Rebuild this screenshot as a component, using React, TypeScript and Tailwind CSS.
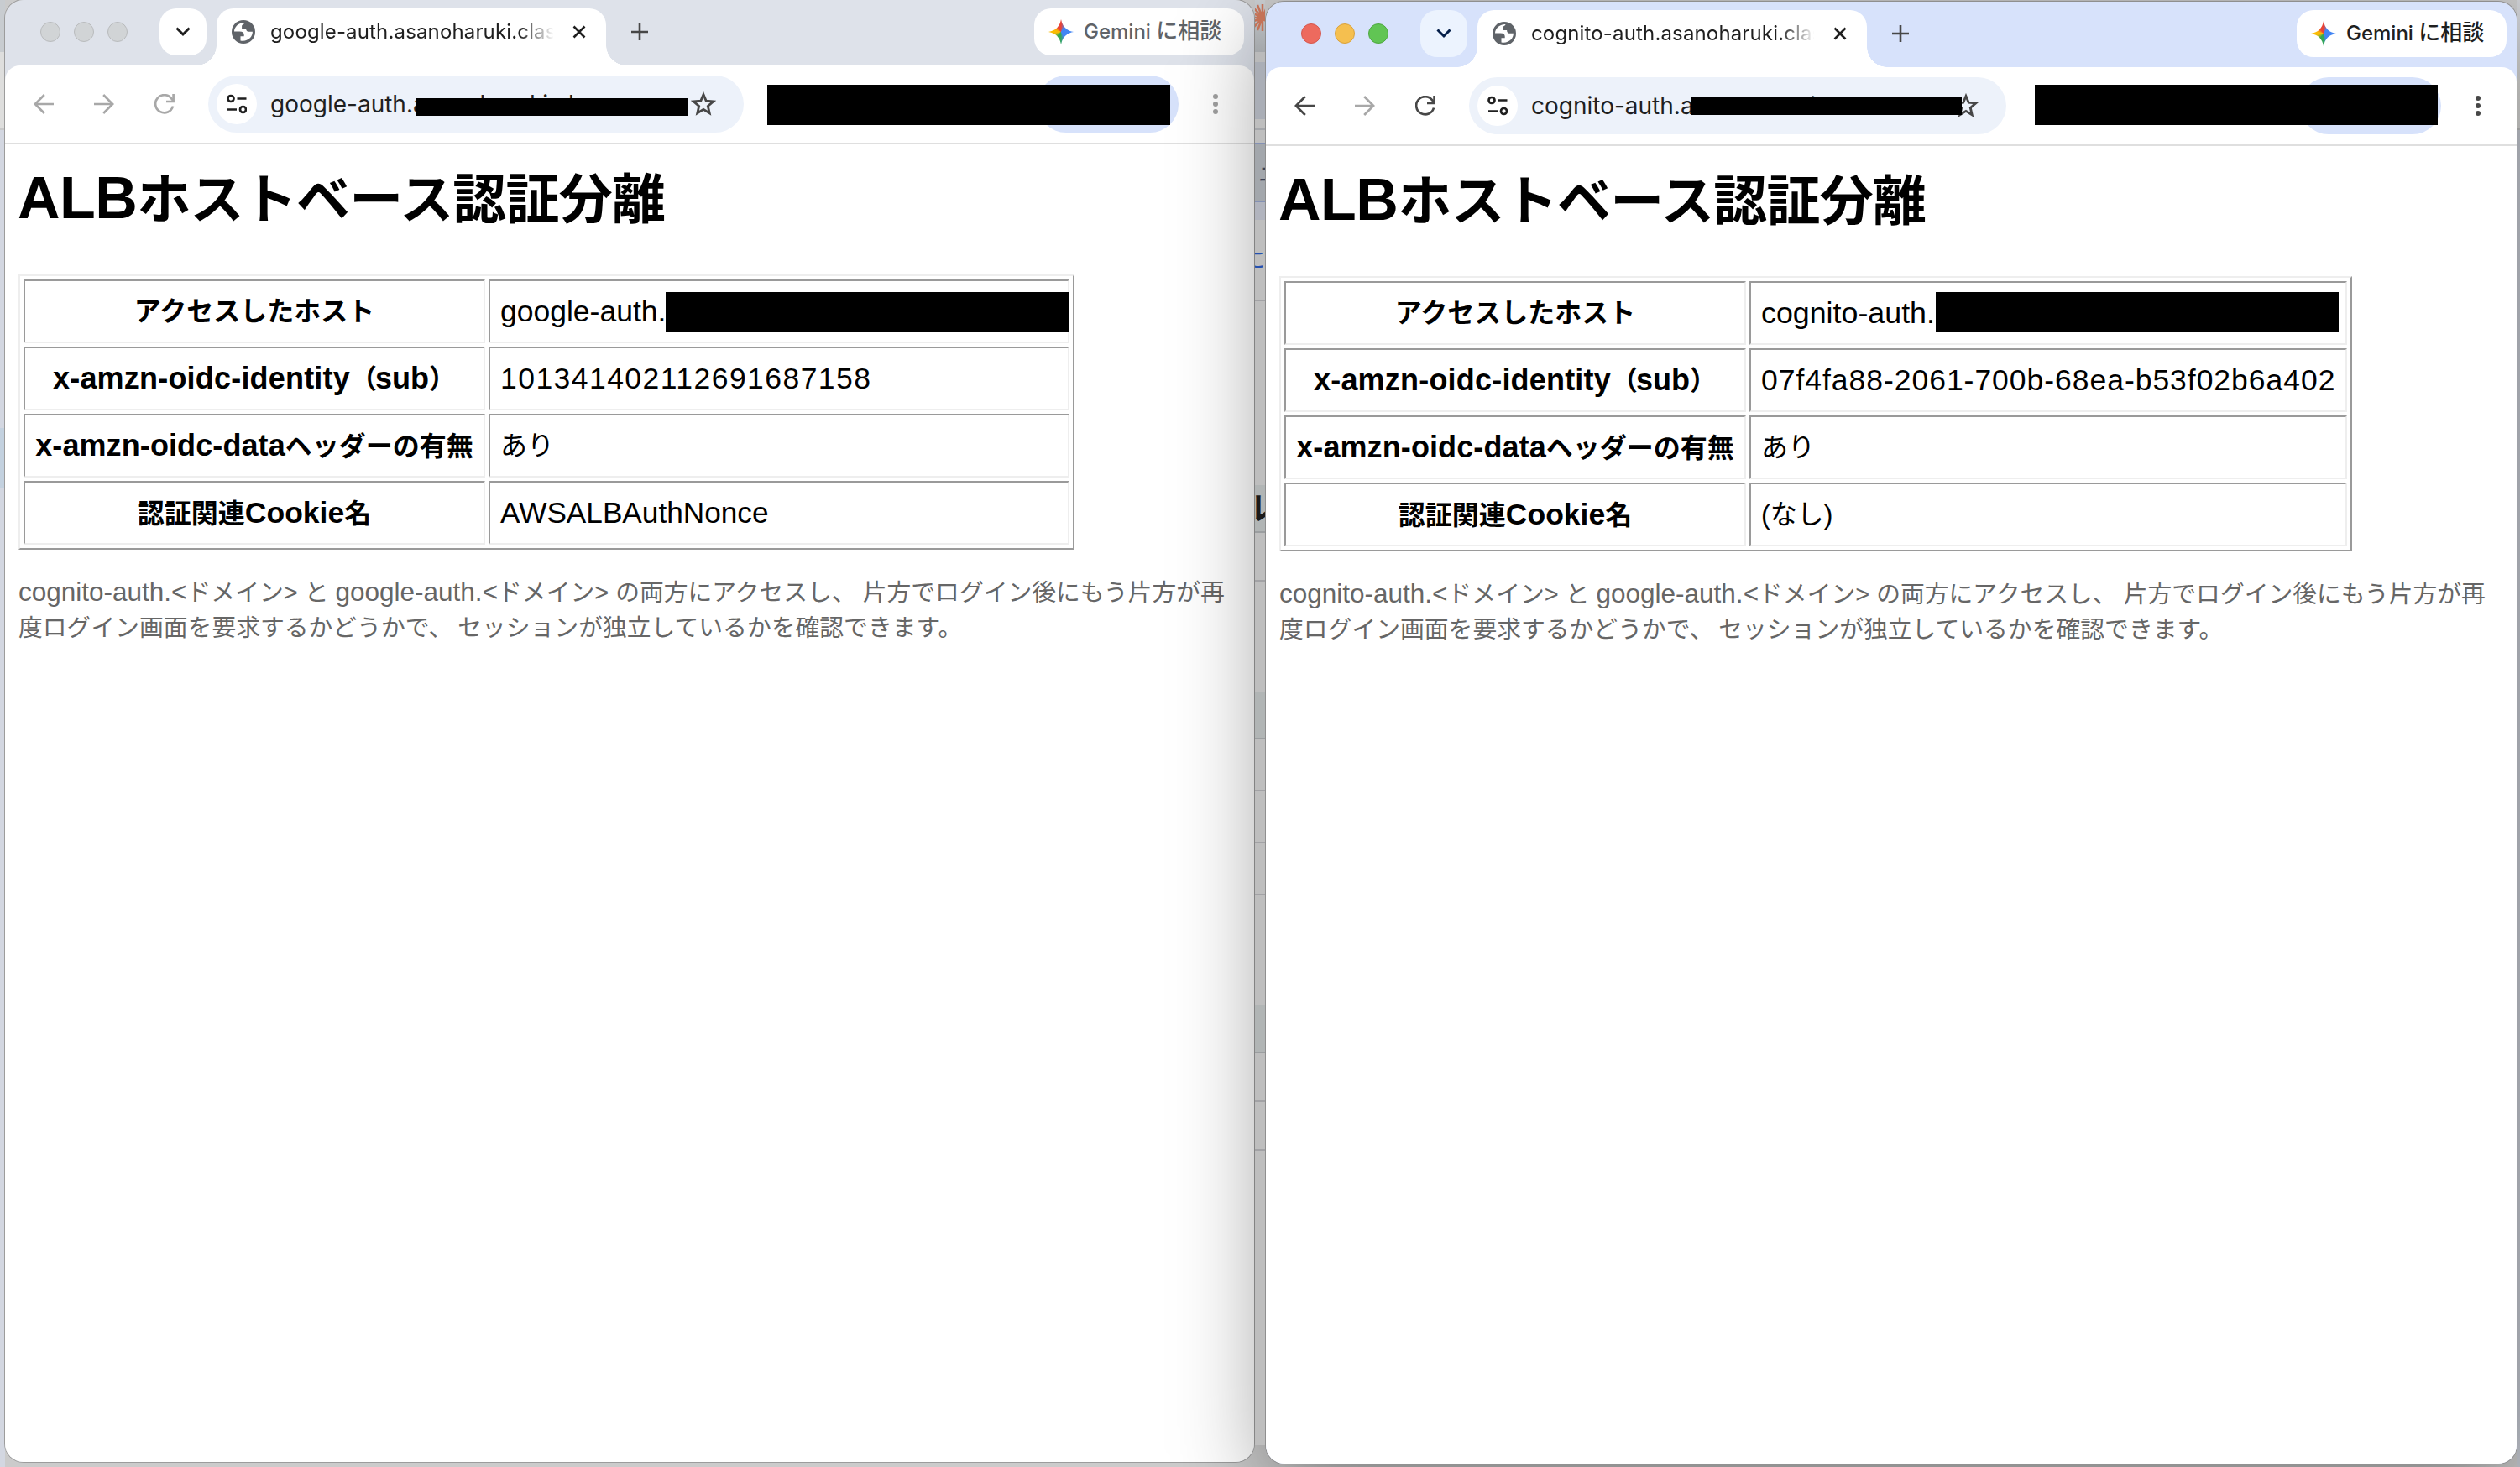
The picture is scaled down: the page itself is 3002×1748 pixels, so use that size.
import React from "react";

const JP = "font-['Liberation_Sans','Noto_Sans_CJK_JP',sans-serif]";
const UI = "font-['Inter','Noto_Sans_CJK_JP',sans-serif]";

const GlobeIcon = () => (
  <svg className="h-7 w-7 shrink-0" viewBox="0 0 28 28">
    <circle cx="14" cy="14" r="14" fill="#5f6368" />
    <path
      d="M15.500 3 C8.500 2.600 3 8 3 13.600 H9.500 c3.600 0 5.200 1.600 5.200 4 v1.600 h-4.200 v5.200 c7.600 1.800 14.400-3.600 14.400-10.600 h-3.400 c-3.200 0-4.400-1.400-4.400-3.900 h-5 V7.200 c0-2 3-2.200 3.400-4.200z"
      fill="#fff"
    />
  </svg>
);

const ChevronIcon = ({ color }: { color: string }) => (
  <svg className="h-[18px] w-[18px]" viewBox="0 0 18 18" fill="none">
    <path d="M1.500 4.500 9 12l7.500-7.500" stroke={color} strokeWidth="3" />
  </svg>
);

const CloseIcon = () => (
  <svg className="h-4 w-4 shrink-0" viewBox="0 0 16 16">
    <path d="M1.500 1.500l13 13M14.500 1.500l-13 13" stroke="#1f1f1f" strokeWidth="2.600" />
  </svg>
);

const PlusIcon = () => (
  <svg className="h-5 w-5 shrink-0" viewBox="0 0 20 20">
    <path d="M10 0v20M0 10h20" stroke="#474747" strokeWidth="2.600" />
  </svg>
);

const ArrowIcon = ({ color, flip }: { color: string; flip?: boolean }) => (
  <svg className={flip ? "h-6 w-6 -scale-x-100" : "h-6 w-6"} viewBox="0 0 24 24" fill="none">
    <path d="M24 12H2M12.800 1 1.800 12l11 11" stroke={color} strokeWidth="2.700" />
  </svg>
);

const ReloadIcon = ({ color }: { color: string }) => (
  <svg className="h-6 w-6" viewBox="0 0 24 24" fill="none">
    <path d="M22 14.500A10.600 10.600 0 1 1 20.300 5.500L22.500 8" stroke={color} strokeWidth="2.700" />
    <path d="M22.600 0v9H14" stroke={color} strokeWidth="2.700" />
  </svg>
);

const TuneIcon = () => (
  <svg className="h-6 w-6" viewBox="0 0 24 24" fill="none" stroke="#1f1f1f" strokeWidth="2.700">
    <circle cx="5" cy="5.500" r="3.500" />
    <path d="M12.500 5.500H23.500M1 18.500h11" />
    <circle cx="19.500" cy="18.500" r="3.500" />
  </svg>
);

const StarIcon = () => (
  <svg className="h-[30px] w-[30px] shrink-0" viewBox="0 0 30 30" fill="none">
    <path
      d="M15 3.500 18.200 11.200 26.700 11.900 20.300 17.400 22.200 25.700 15 21.300 7.800 25.700 9.700 17.400 3.300 11.900 11.800 11.200Z"
      stroke="#474747"
      strokeWidth="2.800"
    />
  </svg>
);

const GeminiIcon = () => (
  <div className="h-[30px] w-[30px] shrink-0 bg-[conic-gradient(from_0deg,#ea4335_0deg,#4285f4_35deg,#4285f4_150deg,#34a853_185deg,#34a853_215deg,#fbbc04_262deg,#fbbc04_285deg,#ea4335_325deg,#ea4335_360deg)] [clip-path:path('M15_0C16.400_8.500_21.500_13.600_30_15C21.500_16.400_16.400_21.500_15_30C13.600_21.500_8.500_16.400_0_15C8.500_13.600_13.600_8.500_15_0Z')]" />
);

const MoreIcon = ({ color }: { color: string }) => (
  <svg className="h-6 w-6" viewBox="0 0 24 24" fill={color}>
    <circle cx="12" cy="3" r="3" />
    <circle cx="12" cy="12" r="3" />
    <circle cx="12" cy="21" r="3" />
  </svg>
);

interface WindowProps {
  active?: boolean;
  host: string;
  children: React.ReactNode;
}

const TabStrip = ({ active, host }: { active?: boolean; host: string }) => (
  <div className="flex h-[78px] items-start pt-[10px]">
    <div className="ml-[42px] flex h-14 items-center gap-4">
      {active ? (
        <>
          <div className="h-6 w-6 rounded-full border border-[#d5584e] bg-[#ed6a5e]" />
          <div className="h-6 w-6 rounded-full border border-[#d9a23c] bg-[#f5bf4f]" />
          <div className="h-6 w-6 rounded-full border border-[#4ea73f] bg-[#61c554]" />
        </>
      ) : (
        <>
          <div className="h-6 w-6 rounded-full border border-[#b9bbbd] bg-[#d1d4d6]" />
          <div className="h-6 w-6 rounded-full border border-[#b9bbbd] bg-[#d1d4d6]" />
          <div className="h-6 w-6 rounded-full border border-[#b9bbbd] bg-[#d1d4d6]" />
        </>
      )}
    </div>
    <div
      className={`ml-[38px] flex h-14 w-14 items-center justify-center rounded-[20px] ${
        active ? "bg-[#ecf3fe]" : "bg-white"
      }`}
    >
      <ChevronIcon color={active ? "#041e49" : "#1f1f1f"} />
    </div>
    <div className="relative ml-3 flex h-[68px] w-[464px] rounded-t-[20px] bg-white pl-[18px]">
      <div className="absolute bottom-0 -left-6 h-6 w-6 bg-[radial-gradient(circle_at_0_0,transparent_23.5px,white_24px)]" />
      <div className="absolute -right-6 bottom-0 h-6 w-6 bg-[radial-gradient(circle_at_100%_0,transparent_23.5px,white_24px)]" />
      <div className="flex h-14 items-center">
        <GlobeIcon />
        <div className="ml-[18px] w-[337px] overflow-hidden text-[24px] leading-[56px] tracking-[0.150px] whitespace-nowrap text-[#1f1f1f] [mask-image:linear-gradient(to_right,black_296px,transparent_338px)]">
          {host}.asanoharuki.class
        </div>
        <div className="ml-[23px]">
          <CloseIcon />
        </div>
      </div>
    </div>
    <div className="ml-[30px] flex h-14 items-center">
      <PlusIcon />
    </div>
    <div className="mr-3 ml-auto flex h-14 w-[250px] items-center rounded-[20px] bg-white pl-[17px]">
      <GeminiIcon />
      <span
        className={`-mt-0.5 ml-3 text-[24px] leading-[56px] font-medium whitespace-nowrap ${
          active ? "text-[#1f1f1f]" : "text-[#5f6368]"
        }`}
      >
        Gemini <span className="text-[26px]">に相談</span>
      </span>
    </div>
  </div>
);

const Toolbar = ({ active, host }: { active?: boolean; host: string }) => (
  <div className="flex h-[94px] items-center rounded-t-[18px] border-b-2 border-[#dfdfdf] bg-white">
    <div className="ml-[34px] flex gap-12">
      <ArrowIcon color={active ? "#474747" : "#a8a8a8"} />
      <ArrowIcon color="#a8a8a8" flip />
      <ReloadIcon color={active ? "#474747" : "#a8a8a8"} />
    </div>
    <div className="relative ml-10 flex h-[68px] flex-1 items-center rounded-full bg-[#edf2fa] pl-[10px]">
      <div className="flex h-12 w-12 items-center justify-center rounded-full bg-white">
        <TuneIcon />
      </div>
      <div className="ml-4 w-[500px] overflow-hidden text-[28px] leading-[68px] whitespace-nowrap text-[#1f1f1f]">
        {host}.asanoharuki.class
      </div>
      <div className="absolute right-[33px]">
        <StarIcon />
      </div>
      <div
        className={
          active
            ? "absolute top-[24px] left-[264px] h-[21px] w-[323px] bg-black"
            : "absolute top-[27px] left-[248px] h-[21px] w-[323px] bg-black"
        }
      />
    </div>
    <div className="relative ml-7 h-[68px] w-[490px]">
      <div className="absolute top-0 right-0 h-[68px] w-[168px] rounded-full bg-[#d7e2fb]" />
      <div
        className={
          active
            ? "absolute top-[9px] left-[6px] h-12 w-[480px] bg-black"
            : "absolute top-[11px] left-0 h-12 w-[480px] bg-black"
        }
      />
    </div>
    <div className="mr-[34px] ml-8">
      <MoreIcon color={active ? "#474747" : "#a0a0a0"} />
    </div>
  </div>
);

const BrowserWindow = ({ active, host, children }: WindowProps) => (
  <div
    className={
      active
        ? "relative mt-[2px] h-[1742px] w-[1490px] rounded-[22px] shadow-[0_0_0_1px_#8f8f8f,0_30px_110px_rgba(0,0,0,0.4)]"
        : "h-[1742px] w-[1488px] rounded-[22px] shadow-[0_0_0_1px_#9c9c9c]"
    }
  >
    <div
      className={`h-full overflow-hidden rounded-[22px] ${
        active ? "bg-[#d7e2fb]" : "bg-[#dee2ea]"
      }`}
    >
      <div className={UI}>
        <TabStrip active={active} host={host} />
        <Toolbar active={active} host={host} />
      </div>
      <div className={`h-[1570px] bg-white pl-4 text-black ${JP}`}>{children}</div>
    </div>
  </div>
);

interface Row {
  label: React.ReactNode;
  value: React.ReactNode;
}

const ResultTable = ({ rows, wide }: { rows: Row[]; wide?: boolean }) => (
  <div className="mt-[35px] inline-grid gap-1 border-2 border-t-[#eeeeee] border-r-[#9a9a9a] border-b-[#9a9a9a] border-l-[#eeeeee] p-1">
    {rows.map((row, i) => (
      <div key={i} className="flex h-[76px] gap-1 text-[32px] leading-[72px] whitespace-nowrap">
        <div className="w-[550px] border-2 border-t-[#9a9a9a] border-r-[#eeeeee] border-b-[#eeeeee] border-l-[#9a9a9a] text-center font-bold">
          {row.label}
        </div>
        <div
          className={`flex border-2 border-t-[#9a9a9a] border-r-[#eeeeee] border-b-[#eeeeee] border-l-[#9a9a9a] pl-3 ${
            wide ? "w-[712px]" : "w-[692px]"
          }`}
        >
          {row.value}
        </div>
      </div>
    ))}
  </div>
);

const ResultPage = ({ rows, wide }: { rows: Row[]; wide?: boolean }) => (
  <>
    <h1 className="h-[120px] pt-4 text-[64px] leading-[96px] font-bold tracking-[-0.800px] whitespace-nowrap">
      <span className="-ml-px text-[70px] tracking-[-0.500px]">ALB</span>ホストベース認証分離
    </h1>
    <ResultTable rows={rows} wide={wide} />
    <p className="mt-[29px] text-[28.800px] leading-[42px] whitespace-nowrap text-[#666666]">
      <span className="text-[31.500px]">cognito-auth.&lt;</span>ドメイン
      <span className="text-[29px]">&gt;</span> と <span className="text-[31.500px]">google-auth.&lt;</span>
      ドメイン<span className="text-[29px]">&gt;</span> の両方にアクセスし、 片方でログイン後にもう片方が再
      <br />
      <span className="[word-spacing:-2px]">
        度ログイン画面を要求するかどうかで、 セッションが独立しているかを確認できます。
      </span>
    </p>
  </>
);

const identityLabel = (
  <>
    <span className="text-[36px] tracking-[0.200px]">x-amzn-oidc-identity</span>
    <span className="tracking-[-2px]">（</span>
    <span className="text-[36px]">sub</span>）
  </>
);

const dataLabel = (
  <>
    <span className="text-[36px] tracking-[0.100px]">x-amzn-oidc-data</span>ヘッダーの有無
  </>
);

const cookieLabel = (
  <>
    認証関連<span className="text-[35.500px]">Cookie</span>名
  </>
);

const googleRows: Row[] = [
  {
    label: "アクセスしたホスト",
    value: (
      <>
        <span className="w-[198px] text-[35.500px]">google-auth.</span>
        <span className="mt-[13px] h-12 w-[480px] shrink-0 bg-black" />
      </>
    ),
  },
  {
    label: identityLabel,
    value: <span className="text-[35.500px] tracking-[1.450px]">101341402112691687158</span>,
  },
  { label: dataLabel, value: "あり" },
  { label: cookieLabel, value: <span className="text-[35.200px]">AWSALBAuthNonce</span> },
];

const cognitoRows: Row[] = [
  {
    label: "アクセスしたホスト",
    value: (
      <>
        <span className="w-[208px] text-[35.800px]">cognito-auth.</span>
        <span className="mt-[11px] h-12 w-[480px] shrink-0 bg-black" />
      </>
    ),
  },
  {
    label: identityLabel,
    value: (
      <span className="text-[35.500px] tracking-[0.970px]">07f4fa88-2061-700b-68ea-b53f02b6a402</span>
    ),
  },
  { label: dataLabel, value: "あり" },
  { label: cookieLabel, value: "(なし)" },
];

// the sliver of the window behind, seen between the two browsers
const BackgroundGap = () => (
  <div className={`relative z-10 h-[1748px] w-[14px] ${JP}`}>
    <div className="relative mx-px h-[1722px] overflow-hidden bg-[#bebebe]">
      <div className="h-[62px] bg-linear-to-b from-[#c3c7ca] to-[#a4a7aa]" />
      <div className="h-3 bg-[#bababa]" />
      <div className="h-[68px] bg-[#aaaeb6]" />
      <div className="h-[13px] border-b-2 border-[#a4a6aa]" />
      <div className="mt-[15px] h-[71px] border-y-2 border-[#8491b4] bg-[#a3a7ac]" />
      <div className="h-[21px] bg-[#b1b4be]" />
      <div className="h-[97px] border-b-2 border-[#a2a2a5]" />
      <div className="mt-[219px] h-[57px] border-b-2 border-[#9b9ea0] bg-[#b1b5b5]" />
      <div className="h-[58px] border-b-2 border-[#a2a2a5]" />
      <div className="mt-[131px] h-[57px] border-b-2 border-[#9b9ea0] bg-[#b1b5b5]" />
      <div className="h-[62px] border-b-2 border-[#a2a2a5]" />
      <div className="h-[62px] border-b-2 border-[#a2a2a5]" />
      <div className="h-[62px] border-b-2 border-[#a2a2a5]" />
      <div className="mt-[131px] h-[57px] border-b-2 border-[#9b9ea0] bg-[#b1b5b5]" />
      <div className="h-[58px] border-b-2 border-[#a2a2a5]" />
      <div className="h-[58px] border-b-2 border-[#a2a2a5]" />
      <svg className="absolute top-[5px] -left-[7px] h-8 w-8" viewBox="0 0 32 32">
        <path
          d="M16 16V0M16 16V32M16 16H0M16 16H32M16 16L5 4M16 16L27 28M16 16L5 28M16 16L27 4M16 16L10 1M16 16L1 9M16 16L1 22M16 16L10 31M16 16L22 1"
          stroke="#c47257"
          strokeWidth="2.500"
        />
      </svg>
      <span className="absolute top-[192px] left-[4px] text-[26px] leading-[32px] text-[#3c4357]">ニ</span>
      <span className="absolute top-[292px] -left-[14px] text-[26px] leading-[36px] text-[#2450b0]">に</span>
      <span className="absolute top-[586px] -left-[18px] text-[38px] leading-[40px] font-bold text-[#1a1a1a]">ル</span>
    </div>
  </div>
);

export default function App() {
  return (
    <div className="flex h-[1748px] w-[3002px] overflow-hidden bg-[#cbcbcb]">
      <div className="h-full w-[6px] bg-[#d3d7e1]">
        <div className="h-[62px] bg-[#c8ccd0]" />
        <div className="h-[93px] border-b-2 border-[#c9c9c9] bg-[#dededd]" />
        <div className="mt-[355px] h-[71px] bg-[#c3d1df]" />
      </div>
      <BrowserWindow host="google-auth">
        <ResultPage rows={googleRows} />
      </BrowserWindow>
      <BackgroundGap />
      <BrowserWindow host="cognito-auth" active>
        <ResultPage rows={cognitoRows} wide />
      </BrowserWindow>
      <div className="h-full flex-1 bg-[#c6cad3]">
        <div className="h-[62px] bg-[#d2d4d8]" />
        <div className="h-[93px] border-b-2 border-[#bdbdbd] bg-[#d6d6d4]" />
      </div>
    </div>
  );
}
